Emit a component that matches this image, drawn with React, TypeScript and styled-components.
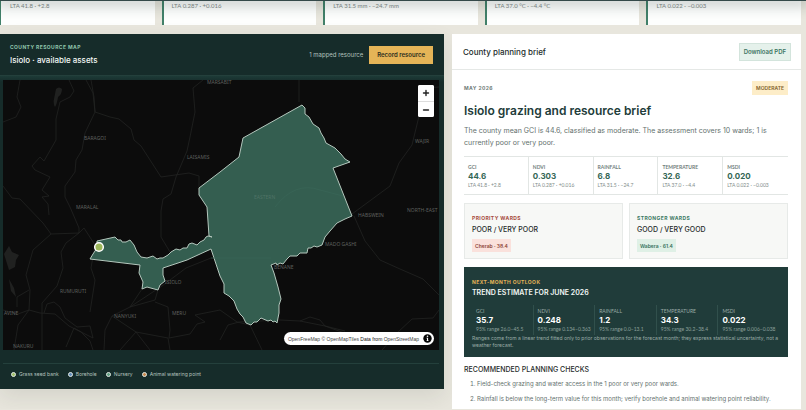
import React from "react";
import styled, { createGlobalStyle } from "styled-components";

const GlobalStyle = createGlobalStyle`
  * { box-sizing: border-box; }
  body {
    margin: 0;
    background: #e8e6dd;
    color: #1c2b2a;
    font-family: Inter, "Open Sans", sans-serif;
    overflow-x: hidden;
  }
  h1, h2, h3, p, dl, dd, ol { margin: 0; }
`;

const HeaderEdge = styled.header`
  position: sticky;
  top: 0;
  z-index: 2;
  height: 1px;
  background: #34494a;
  box-shadow: 0 0 14px 4px rgba(23, 43, 42, 0.3);
`;

const Page = styled.main`
  padding-right: 5px;
`;

const StatRow = styled.section`
  display: grid;
  grid-template-columns: repeat(5, 1fr);
  gap: 7px;
  margin-bottom: 9px;
`;

const StatCard = styled.article`
  height: 24px;
  padding: 1px 8px;
  background: #fdfefd;
  border-left: 2px solid #418069;
  color: #7f8987;
  font-family: Lato, sans-serif;
  font-size: 6px;
  line-height: 8px;

  &:first-child {
    border-left-width: 1px;
    padding-left: 9px;
  }
`;

const Panels = styled.div`
  display: grid;
  grid-template-columns: 444fr 349fr;
  gap: 8px;
  align-items: start;
`;

const MapPanel = styled.section`
  min-width: 0;
  background: #162c2a;
  box-shadow: 0 8px 20px rgba(40, 50, 40, 0.1);
`;

const MapHeader = styled.div`
  display: flex;
  align-items: center;
  gap: 6px;
  height: 42px;
  padding: 0 11px 0 10px;
  border-bottom: 1px solid #24403c;
`;

const MapTitles = styled.div`
  flex: 1;
`;

const Eyebrow = styled.p<{ $color: string }>`
  color: ${(p) => p.$color};
  font-size: 5px;
  font-weight: 700;
  line-height: 8px;
  letter-spacing: 0.08em;
  text-transform: uppercase;
`;

const MapTitle = styled.h2`
  margin-top: 3px;
  color: #f4f8f6;
  font-size: 8px;
  font-weight: 500;
  line-height: 12px;
`;

const MapCount = styled.span`
  color: #b4c2be;
  font-size: 6px;
`;

const Button = styled.button<{ $primary?: boolean }>`
  height: 18px;
  padding: 0 ${(p) => (p.$primary ? 7 : 4)}px;
  border: 1px solid ${(p) => (p.$primary ? "#e5b457" : "#d3e4dc")};
  background: ${(p) => (p.$primary ? "#e5b457" : "#e5f1eb")};
  color: ${(p) => (p.$primary ? "#2c2e1e" : "#3c7462")};
  font-family: inherit;
  font-size: 6px;
  font-weight: 600;
  white-space: nowrap;
`;

const MapFrame = styled.div`
  position: relative;
  margin-bottom: 13px;
  padding: 4px 5px 0 3px;
  background: linear-gradient(#1d3b37, #162c2a 6px);
`;

const MapSvg = styled.svg`
  display: block;
  width: 100%;
  height: 270px;
  background: #0c0c0c;
`;

const ZoomControls = styled.div`
  position: absolute;
  top: 9px;
  right: 10px;
  display: grid;
  width: 16px;
  border-radius: 2px;
  background: #fff;
  overflow: hidden;
`;

const ZoomButton = styled.button`
  display: grid;
  place-items: center;
  height: 16px;
  padding: 0;
  border: 0;
  background: #fff;

  & + & {
    border-top: 1px solid #ddd;
  }
`;

const Attribution = styled.div`
  position: absolute;
  right: 10px;
  bottom: 5px;
  display: flex;
  align-items: center;
  gap: 4px;
  height: 13px;
  padding: 0 2px 0 4px;
  border-radius: 7px;
  background: #fff;
  color: #111;
  font-family: "Liberation Sans", sans-serif;
  font-size: 5px;
  white-space: nowrap;

  a {
    color: #444;
    text-decoration: none;
  }
`;

const Legend = styled.ul`
  display: flex;
  gap: 9px;
  height: 26px;
  margin: 0 5px 0 3px;
  padding: 6px 8px;
  border-top: 1px solid #24403c;
  list-style: none;
`;

const LegendItem = styled.li`
  display: flex;
  align-items: center;
  gap: 3px;
  height: 8px;
  color: #b4c2be;
  font-size: 5px;
`;

const LegendDot = styled.span<{ $color: string }>`
  width: 5px;
  height: 5px;
  border: 1px solid #e2eae4;
  border-radius: 50%;
  background: ${(p) => p.$color};
`;

const Brief = styled.section`
  min-width: 0;
  background: #fff;
`;

const BriefHeader = styled.div`
  display: flex;
  align-items: center;
  justify-content: space-between;
  height: 36px;
  padding: 0 10px 0 11px;
  border-bottom: 1px solid #e5e8e6;
`;

const BriefHeading = styled.h2`
  font-size: 8px;
  font-weight: 500;
`;

const BriefBody = styled.div`
  padding: 11px 13px 4px 12px;
`;

const DateRow = styled.div`
  display: flex;
  align-items: center;
  justify-content: space-between;
  height: 14px;
`;

const Chip = styled.span<{ $tone: "amber" | "red" | "green" }>`
  display: flex;
  align-items: center;
  height: ${(p) => (p.$tone === "amber" ? 14 : 13)}px;
  flex-shrink: 0;
  padding: 0 ${(p) => (p.$tone === "amber" ? 4 : 3)}px;
  background: ${(p) => ({ amber: "#fdedc8", red: "#fae1dc", green: "#dff0e6" })[p.$tone]};
  color: ${(p) => ({ amber: "#80602a", red: "#8d4438", green: "#36705c" })[p.$tone]};
  font-size: 5px;
  font-weight: 600;
`;

const BriefTitle = styled.h1`
  margin-top: 6px;
  color: #223c3a;
  font-size: 12px;
  font-weight: 600;
  line-height: 20px;
`;

const Summary = styled.p`
  margin-top: 4px;
  color: #64716e;
  font-size: 7px;
  line-height: 12px;
`;

const Metrics = styled.dl<{ $dark?: boolean }>`
  display: grid;
  grid-template-columns: repeat(5, 1fr);
  height: ${(p) => (p.$dark ? 30 : 39)}px;
  margin-top: ${(p) => (p.$dark ? 5 : 7)}px;
  border: solid #e2e6e4;
  border-width: ${(p) => (p.$dark ? 0 : 1)}px 0;
`;

const Metric = styled.div<{ $dark?: boolean }>`
  min-width: 0;
  padding: ${(p) => (p.$dark ? 3 : 7)}px 4px 0;
  border-right: 1px solid ${(p) => (p.$dark ? "#31504c" : "#e2e6e4")};
  white-space: nowrap;

  &:last-child {
    border-right: 0;
  }
`;

const MetricLabel = styled.dt<{ $dark?: boolean }>`
  color: ${(p) => (p.$dark ? "#9aaba7" : "#71807c")};
  font-family: Lato, sans-serif;
  font-size: 5px;
  font-weight: ${(p) => (p.$dark ? 400 : 700)};
  line-height: 6px;
`;

const MetricValue = styled.dd<{ $dark?: boolean }>`
  color: ${(p) => (p.$dark ? "#fff" : "#336655")};
  font-size: 8px;
  font-weight: 700;
  line-height: 12px;
`;

const MetricNote = styled.dd<{ $dark?: boolean }>`
  color: ${(p) => (p.$dark ? "#8da09c" : "#818c89")};
  font-family: Lato, sans-serif;
  font-size: 5px;
  line-height: 6px;
`;

const Wards = styled.div`
  display: grid;
  grid-template-columns: 1fr 1fr;
  gap: 6px;
  margin-top: 8px;
`;

const WardCard = styled.article`
  display: flex;
  flex-direction: column;
  align-items: flex-start;
  height: 56px;
  padding: 10px 7px 6px;
  border: 1px solid #e7eae8;
  background: #f7f8f6;
`;

const SectionTitle = styled.h3<{ $light?: boolean }>`
  color: ${(p) => (p.$light ? "#f1f6f4" : "#1f2b2b")};
  font-size: 7px;
  font-weight: ${(p) => (p.$light ? 600 : 500)};
  line-height: 14px;
`;

const WardTitle = styled(SectionTitle)`
  margin: 1px 0 2px;
`;

const Outlook = styled.section`
  height: 90px;
  margin-top: 8px;
  padding: 11px 8px;
  background: #203c3a;
`;

const OutlookNote = styled.p`
  color: #9baca7;
  font-size: 5px;
  line-height: 7px;
`;

const Checks = styled.section`
  margin-top: 6px;
`;

const CheckList = styled.ol`
  display: grid;
  gap: 3px;
  margin-top: 1px;
  padding-left: 13px;
  color: #64716e;
  font-size: 6px;
  line-height: 12px;
`;

const county =
  "302,105 305,108 305,114 309,117 313,124 319,128 321,133 324,138 326,143 335,148 341,154 345,159 350,162 333,168 352,216 345,219 337,223 330,231 325,237 322,245 317,247 314,246 311,248 308,248 307,253 300,253 297,256 290,256 287,259 283,264 280,263 277,265 276,263 271,265 274,273 278,287 281,299 279,305 279,313 277,323 275,321 273,322 271,320 268,321 261,318 257,322 254,322 251,325 246,323 243,317 240,314 237,309 234,301 229,296 224,293 224,284 220,276 211,249 187,260 163,268 163,275 165,281 160,285 158,290 147,287 142,289 143,282 139,273 140,265 90,259 93,254 97,248 97,241 115,237 118,240 121,240 122,242 126,242 130,240 134,245 137,252 141,257 147,258 150,257 153,256 157,259 160,258 163,258 168,255 171,252 176,249 180,250 183,248 187,248 189,244 192,243 197,245 200,242 204,240 206,237 208,236 212,237 209,236 207,207 199,195 199,188 220,172 239,157 243,138";

const roads = [
  "M86 80L93 93L95 112L85 133L82 150L76 160L75 172L65 186L65 197L70 207L79 228L79 233L66 243L61 252L63 268L57 286L42 303L42 350",
  "M91 80L94 97L95 112L110 117L119 119L131 129L134 140L141 146L161 177L189 173L199 176L199 190",
  "M203 80L193 88L195 112L190 137L187 151L176 177L171 194L163 199L161 211L161 237L170 252",
  "M69 80L74 91L70 97L60 102L56 119L56 140L44 161L40 157L32 166L35 170L50 177L42 190L49 196L42 197L48 204L49 215",
  "M20 80L17 97L21 107L16 117L3 122M3 186L12 198L20 199L43 223L51 234L79 233L84 228L95 245L91 268L95 280L90 312",
  "M51 234L33 250L26 275L30 290L29 310L40 313L55 314L69 326L81 332L90 341L93 350",
  "M211 258L186 268L162 286L130 307L112 316L105 330L104 350M158 290L155 300L130 307M142 289L130 307",
  "M112 316L136 332L120 350M136 332L150 350M136 332L168 338L170 350M155 302L168 307L170 330L169 338L190 334L197 324L205 322L195 315L220 310L237 322L250 325L262 350",
  "M220 340L228 325L239 322L280 320L300 321L310 317L320 320L325 326L345 331M299 102L299 80M352 214L390 186L399 163L412 145L420 112L424 88L439 87",
  "M354 216L365 241L380 260L400 269L423 279L439 295M439 310L433 318L412 319L397 333L382 350M300 321L325 326L350 335L360 345L395 338",
  "M3 310L18 314L29 310L18 325L14 350M29 290L17 297L17 307M44 313L47 304L54 302L60 307L65 318L77 327L90 326L93 338L83 333L74 328L66 347",
];

const places: [string, number, number][] = [
  ["MARSABIT", 207, 84],
  ["BARAGOI", 84, 140],
  ["LAISAMIS", 187, 159],
  ["MARALAL", 76, 209],
  ["WAJIR", 415, 143],
  ["NORTH-EAST", 407, 212],
  ["HABSWEIN", 358, 217],
  ["MADO GASHI", 325, 246],
  ["BENANE", 274, 269],
  ["ISIOLO", 165, 284],
  ["MERU", 172, 315],
  ["NANYUKI", 114, 318],
  ["RUMURUTI", 60, 293],
  ["AVINE", 4, 315],
  ["NAKURU", 13, 348],
];

const MapDrawing = () => (
  <MapSvg viewBox="3 80 436 270" preserveAspectRatio="xMidYMid slice" role="img" aria-label="Map of Isiolo county">
    <g fill="none" stroke="#222322" strokeWidth="0.8" strokeLinejoin="round">
      {roads.map((d) => (
        <path key={d} d={d} />
      ))}
    </g>
    <path
      d="M56 89q3-3 6 0q0 5-4 8q-1 7-3 10q-2-3-1-8zM4 254l5-8 3 6 7 3-3 5-1 7-6 3zM9 279l5 9 2 9-5-6z"
      fill="#202120"
    />
    <polygon points={county} fill="#345e50" stroke="#b4c7bd" strokeWidth="1" strokeLinejoin="round" />
    <path d="M211 258H271M275 207Q295 181 320 190L343 196" fill="none" stroke="#3a6658" strokeWidth="0.7" />
    <g fill="#5f605f" fontFamily="Noto Sans, sans-serif" fontSize="5">
      {places.map(([name, x, y]) => (
        <text key={name} x={x} y={y}>
          {name}
        </text>
      ))}
    </g>
    <text x="254" y="199" fill="#4f7366" fontFamily="Noto Sans, sans-serif" fontSize="5">
      EASTERN
    </text>
    <circle cx="99" cy="247" r="4.3" fill="#9cb75b" stroke="#fff" strokeWidth="1.5" />
  </MapSvg>
);

const stats = ["LTA 41.8 · +2.8", "LTA 0.287 · +0.016", "LTA 31.5 mm · −24.7 mm", "LTA 37.0 °C · −4.4 °C", "LTA 0.022 · −0.003"];

const legend = [
  ["Grass seed bank", "#a0bf68"],
  ["Borehole", "#638dbb"],
  ["Nursery", "#619d82"],
  ["Animal watering point", "#c8864b"],
];

const current = [
  ["GCI", "44.6", "LTA 41.8 · +2.8"],
  ["NDVI", "0.303", "LTA 0.287 · +0.016"],
  ["RAINFALL", "6.8", "LTA 31.5 · −24.7"],
  ["TEMPERATURE", "32.6", "LTA 37.0 · −4.4"],
  ["MSDI", "0.020", "LTA 0.022 · −0.003"],
];

const forecast = [
  ["GCI", "35.7", "95% range 26.0–45.5"],
  ["NDVI", "0.248", "95% range 0.134–0.363"],
  ["RAINFALL", "1.2", "95% range 0.0–13.1"],
  ["TEMPERATURE", "34.3", "95% range 30.2–38.4"],
  ["MSDI", "0.022", "95% range 0.006–0.038"],
];

const MetricStrip = ({ items, dark }: { items: string[][]; dark?: boolean }) => (
  <Metrics $dark={dark}>
    {items.map(([label, value, note]) => (
      <Metric key={label} $dark={dark}>
        <MetricLabel $dark={dark}>{label}</MetricLabel>
        <MetricValue $dark={dark}>{value}</MetricValue>
        <MetricNote $dark={dark}>{note}</MetricNote>
      </Metric>
    ))}
  </Metrics>
);

export default function App() {
  return (
    <>
      <GlobalStyle />
      <HeaderEdge />
      <Page>
        <StatRow>
          {stats.map((s) => (
            <StatCard key={s}>{s}</StatCard>
          ))}
        </StatRow>
        <Panels>
          <MapPanel>
            <MapHeader>
              <MapTitles>
                <Eyebrow $color="#8fc4aa">County resource map</Eyebrow>
                <MapTitle>Isiolo · available assets</MapTitle>
              </MapTitles>
              <MapCount>1 mapped resource</MapCount>
              <Button $primary>Record resource</Button>
            </MapHeader>
            <MapFrame>
              <MapDrawing />
              <ZoomControls>
                <ZoomButton aria-label="Zoom in">
                  <svg width="8" height="8" viewBox="0 0 8 8" stroke="#222" strokeWidth="1.4" strokeLinecap="round">
                    <path d="M1.5 4h5M4 1.5v5" />
                  </svg>
                </ZoomButton>
                <ZoomButton aria-label="Zoom out">
                  <svg width="8" height="8" viewBox="0 0 8 8" stroke="#222" strokeWidth="1.4" strokeLinecap="round">
                    <path d="M1.5 4h5" />
                  </svg>
                </ZoomButton>
              </ZoomControls>
              <Attribution>
                <span>
                  <a href="#openfreemap">OpenFreeMap</a> <a href="#openmaptiles">© OpenMapTiles</a> Data from{" "}
                  <a href="#openstreetmap">OpenStreetMap</a>
                </span>
                <svg width="9" height="9" viewBox="0 0 9 9" aria-hidden="true">
                  <circle cx="4.5" cy="4.5" r="4.2" fill="#050505" />
                  <circle cx="4.5" cy="2.3" r="0.8" fill="#fff" />
                  <path d="M3.5 3.8h1.6v2.6h.6v.7H3.4v-.7H4V4.5h-.5z" fill="#fff" />
                </svg>
              </Attribution>
            </MapFrame>
            <Legend>
              {legend.map(([name, color]) => (
                <LegendItem key={name}>
                  <LegendDot $color={color} />
                  {name}
                </LegendItem>
              ))}
            </Legend>
          </MapPanel>
          <Brief>
            <BriefHeader>
              <BriefHeading>County planning brief</BriefHeading>
              <Button>Download PDF</Button>
            </BriefHeader>
            <BriefBody>
              <DateRow>
                <Eyebrow $color="#6e7b78">May 2026</Eyebrow>
                <Chip $tone="amber">MODERATE</Chip>
              </DateRow>
              <BriefTitle>Isiolo grazing and resource brief</BriefTitle>
              <Summary>
                The county mean GCI is 44.6, classified as moderate. The assessment covers 10 wards; 1 is currently poor
                or very poor.
              </Summary>
              <MetricStrip items={current} />
              <Wards>
                <WardCard>
                  <Eyebrow $color="#a64a3b">Priority wards</Eyebrow>
                  <WardTitle>POOR / VERY POOR</WardTitle>
                  <Chip $tone="red">Cherab · 38.4</Chip>
                </WardCard>
                <WardCard>
                  <Eyebrow $color="#3c7a64">Stronger wards</Eyebrow>
                  <WardTitle>GOOD / VERY GOOD</WardTitle>
                  <Chip $tone="green">Wabera · 61.4</Chip>
                </WardCard>
              </Wards>
              <Outlook>
                <Eyebrow $color="#e5b457">Next-month outlook</Eyebrow>
                <SectionTitle $light>TREND ESTIMATE FOR JUNE 2026</SectionTitle>
                <MetricStrip items={forecast} dark />
                <OutlookNote>
                  Ranges come from a linear trend fitted only to prior observations for the forecast month; they express
                  statistical uncertainty, not a weather forecast.
                </OutlookNote>
              </Outlook>
              <Checks>
                <SectionTitle>RECOMMENDED PLANNING CHECKS</SectionTitle>
                <CheckList>
                  <li>Field-check grazing and water access in the 1 poor or very poor wards.</li>
                  <li>Rainfall is below the long-term value for this month; verify borehole and animal watering point reliability.</li>
                </CheckList>
              </Checks>
            </BriefBody>
          </Brief>
        </Panels>
      </Page>
    </>
  );
}
